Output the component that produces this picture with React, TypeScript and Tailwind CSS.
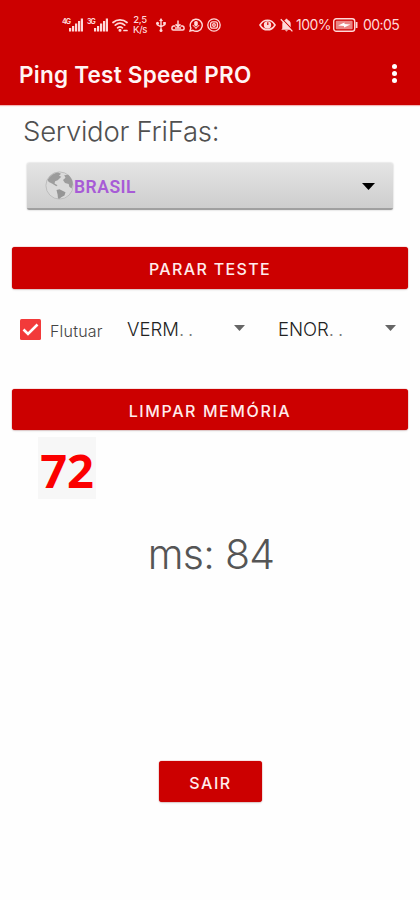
import type { ReactNode } from 'react';

function Signal({ label }: { label: string }) {
  return (
    <div className="flex w-[21px] items-start">
      <span className="mt-[1px] w-[7px] text-[7px] leading-[6px] font-bold tracking-[-1px]">{label}</span>
      <svg className="h-[14px] w-[14px]" viewBox="0 0 14 14" fill="currentColor">
        <rect x="0" y="10" width="2.2" height="3.5" />
        <rect x="3" y="8" width="2.2" height="5.5" />
        <rect x="6" y="5.5" width="2.2" height="8" />
        <rect x="9" y="3" width="2.2" height="10.5" />
        <rect x="11.8" y="0.5" width="2.2" height="13" />
      </svg>
    </div>
  );
}

function StatusBar() {
  return (
    <div className="flex h-[50px] items-center pl-[62px] text-[#ffd9d9]">
      <Signal label="4G" />
      <div className="ml-[4px]">
        <Signal label="3G" />
      </div>
      {/* Wifi */}
      <svg className="ml-[4px] h-[14px] w-[16px]" viewBox="0 0 16 14" fill="none" stroke="currentColor" strokeWidth="1.7" strokeLinecap="round">
        <path d="M1 4.5C5 1 11 1 15 4.5M3.3 7.2c2.8-2.4 6.6-2.4 9.4 0M5.6 9.8c1.5-1.2 3.3-1.2 4.8 0" />
        <circle cx="8" cy="12.2" r="0.7" fill="currentColor" />
        <path d="M12 12.5h3" />
      </svg>
      <div className="ml-[4px] w-[16px] text-center text-[9.5px] leading-[10px] font-medium tracking-[-0.4px]">
        2,5
        <br />
        K/s
      </div>
      {/* Usb */}
      <svg className="ml-[8px] h-[14px] w-[10px]" viewBox="0 0 10 14" fill="none" stroke="currentColor" strokeWidth="1.4">
        <path d="M5 2v10M1.4 5v1.8L5 8.8l3.6-2V5" />
        <path d="M5 0 7 3H3z" fill="currentColor" stroke="none" />
        <circle cx="1.5" cy="5.2" r="1.5" fill="currentColor" stroke="none" />
        <rect x="7.2" y="4" width="2.6" height="2.6" fill="currentColor" stroke="none" />
        <circle cx="5" cy="12.4" r="1.5" fill="currentColor" stroke="none" />
      </svg>
      {/* Tray */}
      <svg className="ml-[5px] h-[14px] w-[14px]" viewBox="0 0 14 14" fill="none" stroke="currentColor" strokeWidth="1.5">
        <path d="M4.5 8H2.3C.4 8.6.4 12 2.3 12h9.4c1.9 0 1.9-3.4 0-4H9.5" />
        <path d="M7 2.5V8M4.6 6.2 7 8.6l2.4-2.4M4 10h6" />
      </svg>
      {/* Chat */}
      <svg className="ml-[4px] h-[14px] w-[14px]" viewBox="0 0 14 14" fill="none" stroke="currentColor" strokeWidth="1.4">
        <path d="M1 13l.9-3A6 6 0 1 1 4 12.3z" />
        <rect x="5.2" y="3" width="3.6" height="5" rx="1.6" fill="currentColor" stroke="none" />
        <path d="M4 7c.6 3 5.4 3 6 0M7 9v2" strokeWidth="1" />
      </svg>
      {/* Camera */}
      <svg className="ml-[4px] h-[14px] w-[14px]" viewBox="0 0 14 14" fill="none" stroke="currentColor" strokeWidth="1.3">
        <circle cx="7" cy="7" r="6.2" />
        <rect x="3.6" y="3.8" width="6.8" height="6.4" rx="2" />
        <circle cx="7" cy="7" r="1.3" />
      </svg>
      {/* Eye */}
      <svg className="ml-[38px] h-[12px] w-[17px]" viewBox="0 0 17 12" fill="none" stroke="currentColor" strokeWidth="1.6">
        <path d="M1 6c3.6-6.4 11.4-6.4 15 0-3.6 6.4-11.4 6.4-15 0z" />
        <circle cx="8.5" cy="6" r="3.7" fill="currentColor" stroke="none" />
        <path d="M8.8 6V3.2" stroke="#cc0000" strokeWidth="1.2" />
      </svg>
      {/* Bell off */}
      <svg className="ml-[4px] h-[14px] w-[13px]" viewBox="0 0 13 14" fill="currentColor">
        <path d="M2.3 10.5V6c0-2.4 1.3-3.6 3-4 0-1.6 2.4-1.6 2.4 0 1.9.4 3 2 3 4v4.5l1 1.2H1.3zM5.2 12.3h2.6c-.3 1.5-2.3 1.5-2.6 0z" />
        <path d="M2 .8l11 11.6" stroke="#cc0000" strokeWidth="1.1" />
        <path d="M.8 1.2l11.6 12.2" stroke="currentColor" strokeWidth="1.3" />
      </svg>
      <span className="ml-[3px] w-[35px] text-[14px] leading-none tracking-[-0.55px]">100%</span>
      {/* Battery */}
      <svg className="ml-[2px] h-[14px] w-[25px]" viewBox="0 0 25 14" fill="none" stroke="currentColor">
        <rect x="0.7" y="0.7" width="21" height="12.6" rx="2.6" strokeWidth="1.4" />
        <rect x="2.8" y="2.8" width="16.8" height="8.4" rx="1" fill="#ea8585" stroke="none" />
        <path d="M5 7.4 11.5 4.4v1.5l6 .7-6.5 3V8.1z" fill="#fff" stroke="none" />
        <path d="M23.6 4v6" strokeWidth="1.8" />
      </svg>
      <span className="ml-[5px] text-[14px] leading-none tracking-[-0.6px]">00:05</span>
    </div>
  );
}

function RedButton({ children, className }: { children: ReactNode; className: string }) {
  return (
    <button
      className={`flex shrink-0 items-center justify-center rounded-[3px] bg-[#cc0000] pt-[2px] text-[16px] font-medium text-[#ffecec] shadow-[0_0_1px_#cc0000,0_1px_2px_rgba(0,0,0,0.15)] ${className}`}
    >
      {children}
    </button>
  );
}

function Caret({ className }: { className: string }) {
  return (
    <svg className={className} viewBox="0 0 12 6" preserveAspectRatio="none" fill="currentColor">
      <path d="M0 0h12L6 6z" />
    </svg>
  );
}

function Globe() {
  return (
    <svg className="h-[29px] w-[29px]" viewBox="0 0 29 29">
      <circle cx="14.5" cy="14.5" r="13.6" fill="#dadada" stroke="#bdbdbd" strokeWidth="1" />
      <path
        d="M2.5 9C5 4.5 9 2 13 1.5l3 1.2-2 2.1 2.3 1-3.6 3.4-2.6 1-.6 2.4 3 1.7-1.2.9L7 12.6 3.8 11z"
        fill="#9c9c9c"
      />
      <path d="M11.5 19l3-.8 6 3-1 3.4-3.3 1.6-1.6 1.6-1.6-.4-.4-4z" fill="#969696" />
      <path d="M19.2 4.2l4-.4c2.6 2.4 4.6 5.7 4.7 9.8l-1.3 4-2.3-1.9-.6-2.7-3.7-.9-2-3 2.5-2.3z" fill="#9c9c9c" />
    </svg>
  );
}

export default function App() {
  return (
    <div className="flex h-[900px] w-[420px] flex-col overflow-hidden bg-[#fefefe] font-['Inter','Noto_Sans',sans-serif]">
      <header className="h-[105px] shrink-0 bg-[#cc0000] shadow-[0_1px_1px_#f3b5b5]">
        <StatusBar />
        <div className="flex h-[50px] items-center justify-between pr-[23px] pl-[19px]">
          <h1 className="text-[22.5px] leading-none font-semibold tracking-[0.25px] text-[#fff4f4]">Ping Test Speed PRO</h1>
          <div className="mb-[4px] flex flex-col gap-[2px]">
            <span className="h-[5px] w-[5px] rounded-full bg-white" />
            <span className="h-[5px] w-[5px] rounded-full bg-white" />
            <span className="h-[5px] w-[5px] rounded-full bg-white" />
          </div>
        </div>
      </header>

      <h2 className="mt-[9px] ml-[23px] h-[34px] text-[27.5px] leading-[34px] font-light tracking-[-0.25px] text-[#505050]">
        Servidor FriFas:
      </h2>

      {/* Server spinner */}
      <div className="mx-[27px] mt-[15px] flex h-[47px] shrink-0 items-center rounded-[2px] border-b-2 border-[#a0a0a0] bg-gradient-to-b from-[#e4e4e4] to-[#cecece] pr-[18px] pl-[18px] shadow-[0_0_2px_#bbb]">
        <Globe />
        <span className="mt-[4px] font-['Roboto'] text-[17.5px] leading-none font-semibold tracking-[0.5px] text-[#a75bd6]">
          BRASIL
        </span>
        <Caret className="mt-[2px] ml-auto h-[7px] w-[13px] text-black" />
      </div>

      <RedButton className="mx-[12px] mt-[37px] h-[42px] tracking-[1.35px]">PARAR TESTE</RedButton>

      <div className="mt-[20px] flex h-[40px] shrink-0 items-center pl-[20px]">
        <svg className="h-[21px] w-[21px]" viewBox="0 0 21 21">
          <rect width="21" height="21" rx="1.5" fill="#f23a3a" />
          <path d="M3.5 10.5l4.5 4.5 9.5-9.5" fill="none" stroke="#fff" strokeWidth="2.6" />
        </svg>
        <span className="mt-[3px] ml-[9px] w-[77px] text-[16px] leading-none font-light tracking-[0.2px] text-[#444]">Flutuar</span>
        <span className="w-[107px] text-[18.5px] leading-none font-light text-[#222]">
          VERM<span className="tracking-[4px] text-[#777]">..</span>
        </span>
        <Caret className="mb-[2px] h-[6px] w-[11px] text-[#666]" />
        <span className="ml-[33px] w-[107px] text-[18.5px] leading-none font-light text-[#222]">
          ENOR<span className="tracking-[4px] text-[#777]">..</span>
        </span>
        <Caret className="mb-[2px] h-[6px] w-[11px] text-[#666]" />
      </div>

      <RedButton className="mx-[12px] mt-[40px] h-[41px] tracking-[1.6px]">LIMPAR MEMÓRIA</RedButton>

      <div className="mt-[7px] ml-[38px] flex h-[62px] w-[58px] shrink-0 items-center justify-center bg-[#f7f7f7]">
        <span className="mt-[4px] font-['Open_Sans'] text-[47px] leading-none font-bold text-[#fb0000]">72</span>
      </div>

      <p className="mt-[30px] h-[50px] pl-[2px] text-center text-[41px] leading-[50px] font-light tracking-[-0.7px] text-[#555]">
        ms: 84
      </p>

      <RedButton className="mt-[182px] ml-[159px] h-[41px] w-[103px] tracking-[1.5px]">SAIR</RedButton>
    </div>
  );
}
